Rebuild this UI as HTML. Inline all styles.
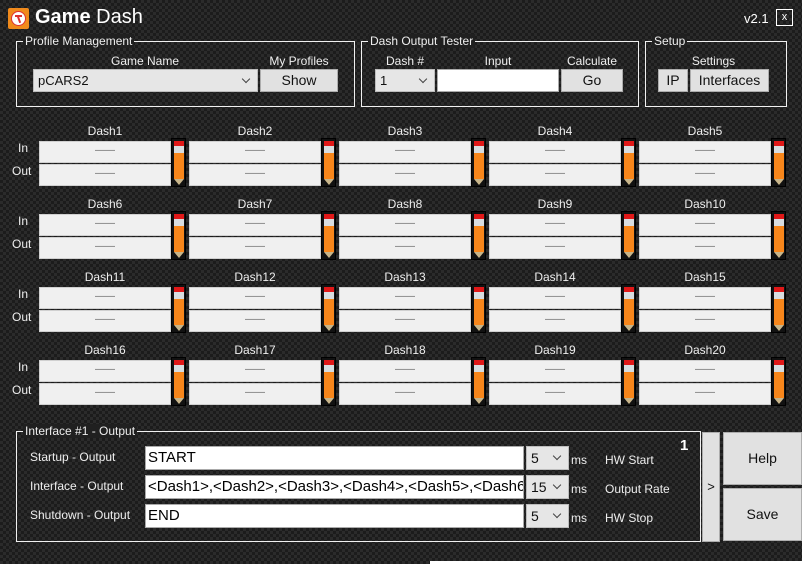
<!DOCTYPE html>
<html><head><meta charset="utf-8"><style>
*{margin:0;padding:0;box-sizing:border-box}
body{width:802px;height:564px;overflow:hidden;font-family:"Liberation Sans",sans-serif;color:#eee;font-size:12px;
background-color:#1c1c1c;
background-image:linear-gradient(45deg,#2b2b2b 25%,transparent 25%,transparent 75%,#2b2b2b 75%),linear-gradient(45deg,#2b2b2b 25%,transparent 25%,transparent 75%,#2b2b2b 75%);
background-size:6px 6px;background-position:0 0,3px 3px;position:relative}
.a{position:absolute}
.grp{position:absolute;border:1px solid #f0f0f0}
.grp>.lg{position:absolute;top:-8px;left:6px;padding:0 2px;background:#202020;font-size:12px;color:#eee;line-height:14px}
.btn{position:absolute;background:#e1e1e1;border:1px solid #adadad;color:#111;font-size:14px;text-align:center}
.cmb{position:absolute;background:#e6e6e6;border:1px solid #bdbdbd;color:#111;font-size:13px;padding-left:4px}
.cmb:after{content:"";position:absolute;right:8px;top:6px;width:5px;height:5px;border-right:1px solid #444;border-bottom:1px solid #444;transform:rotate(45deg)}
.in{position:absolute;background:#fff;border:1px solid #aaa;color:#000;font-size:15px;padding-left:2px;white-space:nowrap;overflow:hidden}
.lbl{position:absolute;font-size:12px;color:#eee;text-align:center}
.cell{position:absolute;width:147px;height:70px}
.cell .t{position:absolute;left:0;width:132px;top:-1px;text-align:center;font-size:12px}
.cell .b{position:absolute;left:0;width:132px;height:22px;background:#f0f0f0;border:1px solid #d0d0d0;color:#666;text-align:center;font-size:10px;line-height:17px}
.cell .p{position:absolute;left:132px;top:13px;width:15px;height:49px;background:#111;border:1px solid #000}
.cell .p i{position:absolute;left:2px;width:10px}
.cell .p i.tip{height:0;width:0;left:2px;top:40px;border-left:5px solid transparent;border-right:5px solid transparent;border-top:6px solid #c8b58a;background:none}
</style></head><body>
<div class="a" style="left:8px;top:8px;width:21px;height:21px;background:#f08a1c;border-radius:2px"><div style="position:absolute;left:3px;top:3px;width:15px;height:15px;border-radius:50%;background:#fff;border:1px solid #d33"></div><div style="position:absolute;left:7px;top:7px;width:7px;height:2px;background:#d33"></div><div style="position:absolute;left:10px;top:8px;width:2px;height:7px;background:#d33;transform:rotate(-20deg)"></div></div>
<div class="a" style="left:35px;top:6px;font-size:20px;color:#fff"><b>Game</b> Dash</div>
<div class="a" style="left:744px;top:11px;font-size:13px;color:#fff">v2.1</div>
<div class="a" style="left:776px;top:9px;width:17px;height:17px;border:1px solid #fff;color:#fff;font-size:11px;text-align:center;line-height:14px">x</div>

<div class="grp" style="left:16px;top:41px;width:339px;height:66px"><span class="lg">Profile Management</span></div>
<div class="lbl" style="left:33px;top:54px;width:224px">Game Name</div>
<div class="lbl" style="left:260px;top:54px;width:78px">My Profiles</div>
<div class="cmb" style="left:33px;top:69px;width:225px;height:23px;line-height:21px">pCARS2</div>
<div class="btn" style="left:260px;top:69px;width:78px;height:23px;line-height:20px">Show</div>

<div class="grp" style="left:361px;top:41px;width:278px;height:66px"><span class="lg">Dash Output Tester</span></div>
<div class="lbl" style="left:375px;top:54px;width:60px">Dash #</div>
<div class="lbl" style="left:437px;top:54px;width:122px">Input</div>
<div class="lbl" style="left:561px;top:54px;width:62px">Calculate</div>
<div class="cmb" style="left:375px;top:69px;width:60px;height:23px;line-height:21px">1</div>
<div class="in" style="left:437px;top:69px;width:122px;height:23px"></div>
<div class="btn" style="left:561px;top:69px;width:62px;height:23px;line-height:20px">Go</div>

<div class="grp" style="left:645px;top:41px;width:142px;height:66px"><span class="lg">Setup</span></div>
<div class="lbl" style="left:658px;top:54px;width:111px">Settings</div>
<div class="btn" style="left:658px;top:69px;width:30px;height:23px;line-height:20px">IP</div>
<div class="btn" style="left:690px;top:69px;width:79px;height:23px;line-height:20px">Interfaces</div>

<div class="lbl" style="left:18px;top:141px">In</div><div class="lbl" style="left:12px;top:164px">Out</div>
<div class="lbl" style="left:18px;top:214px">In</div><div class="lbl" style="left:12px;top:237px">Out</div>
<div class="lbl" style="left:18px;top:287px">In</div><div class="lbl" style="left:12px;top:310px">Out</div>
<div class="lbl" style="left:18px;top:360px">In</div><div class="lbl" style="left:12px;top:383px">Out</div>

<div class="cell" style="left:39px;top:125px"><div class="t">Dash1</div><div class="b" style="top:16px">——</div><div class="b" style="top:39px">——</div><div class="p"><i style="top:2px;height:5px;background:#e01818"></i><i style="top:7px;height:7px;background:#d8dde0"></i><i style="top:14px;height:26px;background:#f7861b"></i><i class="tip"></i></div></div>
<div class="cell" style="left:189px;top:125px"><div class="t">Dash2</div><div class="b" style="top:16px">——</div><div class="b" style="top:39px">——</div><div class="p"><i style="top:2px;height:5px;background:#e01818"></i><i style="top:7px;height:7px;background:#d8dde0"></i><i style="top:14px;height:26px;background:#f7861b"></i><i class="tip"></i></div></div>
<div class="cell" style="left:339px;top:125px"><div class="t">Dash3</div><div class="b" style="top:16px">——</div><div class="b" style="top:39px">——</div><div class="p"><i style="top:2px;height:5px;background:#e01818"></i><i style="top:7px;height:7px;background:#d8dde0"></i><i style="top:14px;height:26px;background:#f7861b"></i><i class="tip"></i></div></div>
<div class="cell" style="left:489px;top:125px"><div class="t">Dash4</div><div class="b" style="top:16px">——</div><div class="b" style="top:39px">——</div><div class="p"><i style="top:2px;height:5px;background:#e01818"></i><i style="top:7px;height:7px;background:#d8dde0"></i><i style="top:14px;height:26px;background:#f7861b"></i><i class="tip"></i></div></div>
<div class="cell" style="left:639px;top:125px"><div class="t">Dash5</div><div class="b" style="top:16px">——</div><div class="b" style="top:39px">——</div><div class="p"><i style="top:2px;height:5px;background:#e01818"></i><i style="top:7px;height:7px;background:#d8dde0"></i><i style="top:14px;height:26px;background:#f7861b"></i><i class="tip"></i></div></div>

<div class="cell" style="left:39px;top:198px"><div class="t">Dash6</div><div class="b" style="top:16px">——</div><div class="b" style="top:39px">——</div><div class="p"><i style="top:2px;height:5px;background:#e01818"></i><i style="top:7px;height:7px;background:#d8dde0"></i><i style="top:14px;height:26px;background:#f7861b"></i><i class="tip"></i></div></div>
<div class="cell" style="left:189px;top:198px"><div class="t">Dash7</div><div class="b" style="top:16px">——</div><div class="b" style="top:39px">——</div><div class="p"><i style="top:2px;height:5px;background:#e01818"></i><i style="top:7px;height:7px;background:#d8dde0"></i><i style="top:14px;height:26px;background:#f7861b"></i><i class="tip"></i></div></div>
<div class="cell" style="left:339px;top:198px"><div class="t">Dash8</div><div class="b" style="top:16px">——</div><div class="b" style="top:39px">——</div><div class="p"><i style="top:2px;height:5px;background:#e01818"></i><i style="top:7px;height:7px;background:#d8dde0"></i><i style="top:14px;height:26px;background:#f7861b"></i><i class="tip"></i></div></div>
<div class="cell" style="left:489px;top:198px"><div class="t">Dash9</div><div class="b" style="top:16px">——</div><div class="b" style="top:39px">——</div><div class="p"><i style="top:2px;height:5px;background:#e01818"></i><i style="top:7px;height:7px;background:#d8dde0"></i><i style="top:14px;height:26px;background:#f7861b"></i><i class="tip"></i></div></div>
<div class="cell" style="left:639px;top:198px"><div class="t">Dash10</div><div class="b" style="top:16px">——</div><div class="b" style="top:39px">——</div><div class="p"><i style="top:2px;height:5px;background:#e01818"></i><i style="top:7px;height:7px;background:#d8dde0"></i><i style="top:14px;height:26px;background:#f7861b"></i><i class="tip"></i></div></div>

<div class="cell" style="left:39px;top:271px"><div class="t">Dash11</div><div class="b" style="top:16px">——</div><div class="b" style="top:39px">——</div><div class="p"><i style="top:2px;height:5px;background:#e01818"></i><i style="top:7px;height:7px;background:#d8dde0"></i><i style="top:14px;height:26px;background:#f7861b"></i><i class="tip"></i></div></div>
<div class="cell" style="left:189px;top:271px"><div class="t">Dash12</div><div class="b" style="top:16px">——</div><div class="b" style="top:39px">——</div><div class="p"><i style="top:2px;height:5px;background:#e01818"></i><i style="top:7px;height:7px;background:#d8dde0"></i><i style="top:14px;height:26px;background:#f7861b"></i><i class="tip"></i></div></div>
<div class="cell" style="left:339px;top:271px"><div class="t">Dash13</div><div class="b" style="top:16px">——</div><div class="b" style="top:39px">——</div><div class="p"><i style="top:2px;height:5px;background:#e01818"></i><i style="top:7px;height:7px;background:#d8dde0"></i><i style="top:14px;height:26px;background:#f7861b"></i><i class="tip"></i></div></div>
<div class="cell" style="left:489px;top:271px"><div class="t">Dash14</div><div class="b" style="top:16px">——</div><div class="b" style="top:39px">——</div><div class="p"><i style="top:2px;height:5px;background:#e01818"></i><i style="top:7px;height:7px;background:#d8dde0"></i><i style="top:14px;height:26px;background:#f7861b"></i><i class="tip"></i></div></div>
<div class="cell" style="left:639px;top:271px"><div class="t">Dash15</div><div class="b" style="top:16px">——</div><div class="b" style="top:39px">——</div><div class="p"><i style="top:2px;height:5px;background:#e01818"></i><i style="top:7px;height:7px;background:#d8dde0"></i><i style="top:14px;height:26px;background:#f7861b"></i><i class="tip"></i></div></div>

<div class="cell" style="left:39px;top:344px"><div class="t">Dash16</div><div class="b" style="top:16px">——</div><div class="b" style="top:39px">——</div><div class="p"><i style="top:2px;height:5px;background:#e01818"></i><i style="top:7px;height:7px;background:#d8dde0"></i><i style="top:14px;height:26px;background:#f7861b"></i><i class="tip"></i></div></div>
<div class="cell" style="left:189px;top:344px"><div class="t">Dash17</div><div class="b" style="top:16px">——</div><div class="b" style="top:39px">——</div><div class="p"><i style="top:2px;height:5px;background:#e01818"></i><i style="top:7px;height:7px;background:#d8dde0"></i><i style="top:14px;height:26px;background:#f7861b"></i><i class="tip"></i></div></div>
<div class="cell" style="left:339px;top:344px"><div class="t">Dash18</div><div class="b" style="top:16px">——</div><div class="b" style="top:39px">——</div><div class="p"><i style="top:2px;height:5px;background:#e01818"></i><i style="top:7px;height:7px;background:#d8dde0"></i><i style="top:14px;height:26px;background:#f7861b"></i><i class="tip"></i></div></div>
<div class="cell" style="left:489px;top:344px"><div class="t">Dash19</div><div class="b" style="top:16px">——</div><div class="b" style="top:39px">——</div><div class="p"><i style="top:2px;height:5px;background:#e01818"></i><i style="top:7px;height:7px;background:#d8dde0"></i><i style="top:14px;height:26px;background:#f7861b"></i><i class="tip"></i></div></div>
<div class="cell" style="left:639px;top:344px"><div class="t">Dash20</div><div class="b" style="top:16px">——</div><div class="b" style="top:39px">——</div><div class="p"><i style="top:2px;height:5px;background:#e01818"></i><i style="top:7px;height:7px;background:#d8dde0"></i><i style="top:14px;height:26px;background:#f7861b"></i><i class="tip"></i></div></div>

<div class="grp" style="left:16px;top:431px;width:685px;height:111px"><span class="lg">Interface #1 - Output</span></div>
<div class="a" style="left:680px;top:437px;font-size:15px;font-weight:bold;color:#fff">1</div>
<div class="lbl" style="left:30px;top:450px">Startup - Output</div>
<div class="lbl" style="left:30px;top:479px">Interface - Output</div>
<div class="lbl" style="left:30px;top:508px">Shutdown - Output</div>
<div class="in" style="left:145px;top:446px;width:379px;height:24px;line-height:22px">START</div>
<div class="in" style="left:145px;top:475px;width:379px;height:24px;line-height:22px">&lt;Dash1&gt;,&lt;Dash2&gt;,&lt;Dash3&gt;,&lt;Dash4&gt;,&lt;Dash5&gt;,&lt;Dash6&gt;</div>
<div class="in" style="left:145px;top:504px;width:379px;height:24px;line-height:22px">END</div>
<div class="cmb" style="left:526px;top:446px;width:43px;height:24px;line-height:22px;font-size:14px">5</div>
<div class="cmb" style="left:526px;top:475px;width:43px;height:24px;line-height:22px;font-size:14px">15</div>
<div class="cmb" style="left:526px;top:504px;width:43px;height:24px;line-height:22px;font-size:14px">5</div>
<div class="lbl" style="left:571px;top:453px">ms</div><div class="lbl" style="left:605px;top:453px">HW Start</div>
<div class="lbl" style="left:571px;top:482px">ms</div><div class="lbl" style="left:605px;top:482px">Output Rate</div>
<div class="lbl" style="left:571px;top:511px">ms</div><div class="lbl" style="left:605px;top:511px">HW Stop</div>
<div class="btn" style="left:702px;top:432px;width:18px;height:110px;line-height:108px;font-size:13px">&gt;</div>
<div class="btn" style="left:723px;top:432px;width:79px;height:53px;line-height:51px">Help</div>
<div class="btn" style="left:723px;top:488px;width:79px;height:53px;line-height:51px">Save</div>
<div class="a" style="left:430px;top:561px;width:372px;height:3px;background:#fff"></div>
</body></html>
